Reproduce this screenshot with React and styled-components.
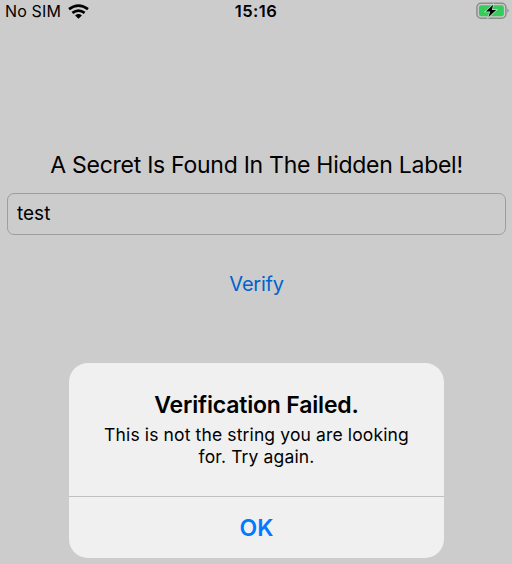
import React from "react";
import styled, { createGlobalStyle } from "styled-components";

const Global = createGlobalStyle`
  * { box-sizing: border-box; }
  body { margin: 0; background: #cccccc; }
`;
const Screen = styled.main`
  position: relative;
  width: 512px;
  height: 564px;
  overflow: hidden;
  background: #cccccc;
  color: #000;
  font-family: Inter, "Liberation Sans", sans-serif;
`;
const StatusBar = styled.header`
  display: grid;
  grid-template-columns: 1fr auto 1fr;
  align-items: center;
  height: 24px;
  padding: 0 2px 2px 5px;
  font-size: 16px;
  line-height: 22px;
`;
const Carrier = styled.div`
  display: flex;
  align-items: center;
  gap: 7px;
  white-space: nowrap;
  letter-spacing: 0.15px;
`;
const Clock = styled.time`
  margin-right: 3px;
  font-size: 16.5px;
  font-weight: 600;
  letter-spacing: 0.5px;
`;
const Battery = styled.svg`
  justify-self: end;
  display: block;
`;
const Form = styled.section`
  display: flex;
  flex-direction: column;
  align-items: center;
  padding: 125px 6px 0 7px;
`;
const Title = styled.h1`
  margin: 0;
  height: 44px;
  line-height: 32px;
  font-size: 23px;
  font-weight: 400;
  letter-spacing: -0.27px;
  white-space: nowrap;
`;
const Field = styled.input`
  width: 499px;
  height: 42px;
  padding: 0 9px 2px;
  border: 1px solid #9e9e9e;
  border-radius: 7px;
  background: #cccccc;
  color: #000;
  font: 400 19px Inter, sans-serif;
  outline: none;
`;
const VerifyButton = styled.button`
  margin: 34px 0 0;
  padding: 0;
  border: 0;
  background: none;
  color: #0062cc;
  font: 400 20px/30px Inter, sans-serif;
  letter-spacing: -0.25px;
`;
const Alert = styled.section`
  position: absolute;
  left: 69px;
  top: 363px;
  width: 375px;
  height: 195px;
  display: flex;
  flex-direction: column;
  border-radius: 19px;
  background: #f0f0f0;
  text-align: center;
  overflow: hidden;
`;
const AlertBody = styled.div`
  height: 133px;
  padding-top: 27px;
`;
const AlertTitle = styled.h2`
  margin: 0;
  font-size: 23px;
  line-height: 30px;
  font-weight: 600;
  letter-spacing: -0.18px;
`;
const Message = styled.p`
  margin: 4px 0 0;
  font-size: 17.5px;
  line-height: 22px;
  letter-spacing: 0.13px;
`;
const AlertButton = styled.button`
  flex: 1;
  border: 0;
  border-top: 1px solid #c0c0c0;
  padding: 0;
  background: none;
  color: #007aff;
  font: 600 23px Inter, sans-serif;
`;

export default function App() {
  return (
    <Screen>
      <Global />
      <StatusBar>
        <Carrier>
          <span>No SIM</span>
          <svg width="21" height="15" viewBox="0 0 21 15" fill="none" stroke="#000" strokeWidth="2.7">
            <path d="M1 5.2Q10.5 -1.8 20 5.2M4.4 8.9Q10.5 4.3 16.6 8.9" />
            <path d="M7.1 11.4Q10.5 8.8 13.9 11.4L10.5 14.8Z" fill="#000" stroke="none" />
          </svg>
        </Carrier>
        <Clock>15:16</Clock>
        <Battery width="34" height="18" viewBox="0 0 34 18">
          <rect x="0.9" y="1.2" width="29" height="15" rx="4.2" fill="none" stroke="#8c8c8c" strokeWidth="1.5" />
          <rect x="2.9" y="3.2" width="25" height="11" rx="2.3" fill="#35cc5b" />
          <path d="M31.4 6.3Q34 8.7 31.4 11.1Z" fill="#8c8c8c" />
          <path d="M17.1 2.8L9.8 9.5H14.2L12.5 15.1L20.2 7.9H15.9Z" fill="#000" stroke="#bde0c6" strokeWidth="1.5" paintOrder="stroke" />
        </Battery>
      </StatusBar>
      <Form>
        <Title>A Secret Is Found In The Hidden Label!</Title>
        <Field defaultValue="test" aria-label="Secret" />
        <VerifyButton>Verify</VerifyButton>
      </Form>
      <Alert role="alertdialog">
        <AlertBody>
          <AlertTitle>Verification Failed.</AlertTitle>
          <Message>This is not the string you are looking<br />for. Try again.</Message>
        </AlertBody>
        <AlertButton>OK</AlertButton>
      </Alert>
    </Screen>
  );
}
